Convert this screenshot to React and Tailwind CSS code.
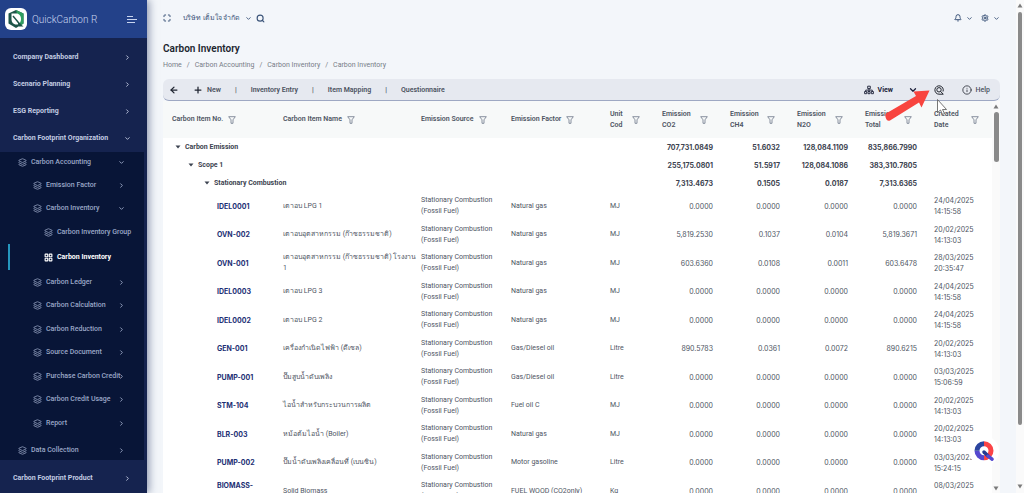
import clsx from 'clsx';
import {
  ArrowLeft,
  Bell,
  ChevronDown,
  ChevronRight,
  Info,
  Layers,
  LayoutGrid,
  Maximize,
  Plus,
  Search,
  Settings,
} from 'lucide-react';

const SUB_MENU = [
  { label: 'Carbon Accounting', level: 1, open: true },
  { label: 'Emission Factor', level: 2 },
  { label: 'Carbon Inventory', level: 2, open: true },
  { label: 'Carbon Inventory Group', level: 3 },
  { label: 'Carbon Inventory', level: 3, active: true },
  { label: 'Carbon Ledger', level: 2 },
  { label: 'Carbon Calculation', level: 2 },
  { label: 'Carbon Reduction', level: 2 },
  { label: 'Source Document', level: 2 },
  { label: 'Purchase Carbon Credit', level: 2 },
  { label: 'Carbon Credit Usage', level: 2 },
  { label: 'Report', level: 2 },
  { label: 'Data Collection', level: 1, last: true },
];

const COLUMNS = [
  { title: 'Carbon Item No.', width: 'w-[111px]' },
  { title: 'Carbon Item Name' },
  { title: 'Emission Source', width: 'w-[90px]' },
  { title: 'Emission Factor', width: 'w-[99px]' },
  { title: 'Unit', second: 'Cod', width: 'w-[52px]' },
  { title: 'Emission', second: 'CO2', width: 'w-[68px]' },
  { title: 'Emission', second: 'CH4', width: 'w-[67px]' },
  { title: 'Emission', second: 'N2O', width: 'w-[68px]' },
  { title: 'Emission', second: 'Total', width: 'w-[69px]' },
  { title: 'Created', second: 'Date', width: 'w-[67px]' },
];

const GROUPS = [
  { label: 'Carbon Emission', indent: 'pl-3', values: ['707,731.0849', '51.6032', '128,084.1109', '835,866.7990'] },
  { label: 'Scope 1', indent: 'pl-[25px]', values: ['255,175.0801', '51.5917', '128,084.1086', '383,310.7805'] },
  { label: 'Stationary Combustion', indent: 'pl-[41px]', values: ['7,313.4673', '0.1505', '0.0187', '7,313.6365'] },
];

const ZERO = ['0.0000', '0.0000', '0.0000', '0.0000'];

const ITEMS = [
  { no: 'IDEL0001', name: 'เตาอบ LPG 1', factor: 'Natural gas', unit: 'MJ', values: ZERO, date: '24/04/2025', time: '14:15:58' },
  { no: 'OVN-002', name: 'เตาอบอุตสาหกรรม (ก๊าซธรรมชาติ)', factor: 'Natural gas', unit: 'MJ', values: ['5,819.2530', '0.1037', '0.0104', '5,819.3671'], date: '20/02/2025', time: '14:13:03' },
  { no: 'OVN-001', name: 'เตาอบอุตสาหกรรม (ก๊าซธรรมชาติ) โรงงาน\n1', factor: 'Natural gas', unit: 'MJ', values: ['603.6360', '0.0108', '0.0011', '603.6478'], date: '28/03/2025', time: '20:35:47' },
  { no: 'IDEL0003', name: 'เตาอบ LPG 3', factor: 'Natural gas', unit: 'MJ', values: ZERO, date: '24/04/2025', time: '14:15:58' },
  { no: 'IDEL0002', name: 'เตาอบ LPG 2', factor: 'Natural gas', unit: 'MJ', values: ZERO, date: '24/04/2025', time: '14:15:58' },
  { no: 'GEN-001', name: 'เครื่องกำเนิดไฟฟ้า (ดีเซล)', factor: 'Gas/Diesel oil', unit: 'Litre', values: ['890.5783', '0.0361', '0.0072', '890.6215'], date: '20/02/2025', time: '14:13:03' },
  { no: 'PUMP-001', name: 'ปั๊มสูบน้ำดับเพลิง', factor: 'Gas/Diesel oil', unit: 'Litre', values: ZERO, date: '03/03/2025', time: '15:06:59' },
  { no: 'STM-104', name: 'ไอน้ำสำหรับกระบวนการผลิต', factor: 'Fuel oil C', unit: 'MJ', values: ZERO, date: '20/02/2025', time: '14:13:03' },
  { no: 'BLR-003', name: 'หม้อต้มไอน้ำ (Boiler)', factor: 'Natural gas', unit: 'MJ', values: ZERO, date: '20/02/2025', time: '14:13:03' },
  { no: 'PUMP-002', name: 'ปั๊มน้ำดับเพลิงเคลื่อนที่ (เบนซิน)', factor: 'Motor gasoline', unit: 'Litre', values: ZERO, date: '03/03/2025', time: '15:24:15' },
  { no: 'BIOMASS-001', name: 'Solid Biomass', factor: 'FUEL WOOD (CO2only)', unit: 'Kg', values: ZERO, date: '08/03/2025', time: '10:20:31' },
];

function Logo() {
  return (
    <svg viewBox="0 0 22 22" className="size-[22px] shrink-0">
      <rect width="22" height="22" rx="6" fill="#fff" />
      <path d="M11 2 L18.5 5.500 V15.500 L11 20 L3.5 15.500 V5.500 Z" fill="#1d5548" />
      <path d="M11 2 L18.5 5.500 V15.500 L15 18 L13 10 Z" fill="#2f9e5f" />
      <path d="M6.500 5.500 H11 C14.500 5.500 16 8 16 11 C16 14.500 14 16.500 11.500 16.500 C8 16.500 6.500 14 6.500 11 Z" fill="#fff" />
      <path d="M8 8 L15.500 17" stroke="#1d5548" strokeWidth="1.4" />
      <path d="M12.500 13.500 L18.500 18.500 L14 18.500 Z" fill="#1d5548" />
    </svg>
  );
}

function FilterIcon() {
  return (
    <svg viewBox="0 0 8 8" className="size-2 shrink-0" fill="none" stroke="#7c8594" strokeWidth="0.9">
      <path d="M0.700 0.700 H7.300 L5 3.800 V7.300 H3 V3.800 Z" strokeLinejoin="round" />
    </svg>
  );
}

function HierarchyIcon() {
  return (
    <svg viewBox="0 0 10 10" className="size-2.5" fill="none" stroke="#2b2f45" strokeWidth="1">
      <path d="M3.700 1.200 H6.300 V3.600 H3.700 Z M0.600 6.500 H2.700 V8.700 H0.600 Z M4 6.500 H6 V8.700 H4 Z M7.300 6.500 H9.400 V8.700 H7.300 Z" />
      <path d="M5 3.600 V6.500 M1.700 6.500 V5.100 H8.300 V6.500" />
    </svg>
  );
}

function Triangle({ up }) {
  return (
    <svg viewBox="0 0 6 5" className="h-[5px] w-1.5 shrink-0" fill="#7b7b7b">
      <path d={up ? 'M3 0.500 L5.500 4.500 H0.500 Z' : 'M0.500 0.500 H5.500 L3 4.500 Z'} />
    </svg>
  );
}

function TopLink({ label, open, className }) {
  return (
    <a href="#" className={clsx('flex h-[27px] shrink-0 items-center justify-between pr-4 pl-[13px] text-[7px] font-bold text-[#c3cce2]', className)}>
      {label}
      {open ? <ChevronDown className="size-[7px]" strokeWidth={3} /> : <ChevronRight className="size-[7px]" strokeWidth={3} />}
    </a>
  );
}

function SubLink({ item }) {
  const Icon = item.active ? LayoutGrid : Layers;
  const Chevron = item.open ? ChevronDown : ChevronRight;
  return (
    <a
      href="#"
      className={clsx(
        'flex shrink-0 items-center gap-1 pr-[19px] text-[7px] whitespace-nowrap',
        item.active && 'ml-2 h-[26px] border-l-2 border-[#2596be] pl-[34px] font-bold text-white',
        !item.active && 'font-medium text-[#9ba8c7]',
        item.last && 'mt-[5px] h-5',
        item.level === 1 && 'pl-[18px]',
        item.level === 1 && !item.last && 'h-[21px]',
        item.level === 2 && 'h-[23px] pl-[33px] even:h-6',
        item.level === 3 && !item.active && 'h-6 pl-11'
      )}
    >
      <Icon className="size-[9px] shrink-0" strokeWidth={item.active ? 3 : 2} />
      <span className="min-w-0 flex-1">{item.label}</span>
      {item.level < 3 && <Chevron className="size-[7px] shrink-0" strokeWidth={3} />}
    </a>
  );
}

function Sidebar() {
  return (
    <aside className="z-10 flex w-[147px] shrink-0 flex-col overflow-hidden bg-[#15234f] shadow-[2px_0_8px_rgba(40,55,100,0.5)]">
      <div className="flex h-[38px] shrink-0 items-center gap-[5px] bg-[#234189] pr-2.5 pl-[5px]">
        <Logo />
        <span className="flex-1 text-[10px] font-light whitespace-nowrap text-[#c9d5ef]">QuickCarbon R</span>
        <button aria-label="Toggle menu" className="flex h-3 w-2.5 flex-col justify-center gap-0.5">
          <span className="h-px w-1.5 bg-[#c9d5ef]" />
          <span className="h-px w-2.5 bg-[#c9d5ef]" />
          <span className="h-px w-2 bg-[#c9d5ef]" />
        </button>
      </div>
      <nav className="flex flex-col pt-1.5">
        <TopLink label="Company Dashboard" />
        <TopLink label="Scenario Planning" />
        <TopLink label="ESG Reporting" />
        <TopLink label="Carbon Footprint Organization" open />
        <div className="mr-[3px] flex flex-col bg-[#081537]">
          {SUB_MENU.map((item, i) => (
            <SubLink key={i} item={item} />
          ))}
        </div>
        <TopLink label="Carbon Footprint Product" className="mt-[5px]" />
      </nav>
    </aside>
  );
}

function TopBar() {
  return (
    <header className="flex h-9 shrink-0 items-center text-[#3b5479]">
      <button aria-label="Full screen" className="mr-3">
        <Maximize className="size-2" strokeWidth={3} />
      </button>
      <div className="flex items-center">
        <select aria-label="Company" className="w-[62px] appearance-none bg-transparent text-[7px] font-medium">
          <option>บริษัท เต็มใจ จำกัด</option>
        </select>
        <ChevronDown className="size-[7px]" strokeWidth={3} />
      </div>
      <button aria-label="Search" className="ml-1">
        <Search className="size-[9px]" strokeWidth={3} />
      </button>
      <div className="ml-auto flex items-center gap-2">
        <button aria-label="Notifications" className="flex items-center gap-1">
          <Bell className="size-2" strokeWidth={3} />
          <ChevronDown className="size-[7px]" strokeWidth={3} />
        </button>
        <button aria-label="Settings" className="flex items-center gap-1">
          <Settings className="size-2" strokeWidth={3} />
          <ChevronDown className="size-[7px]" strokeWidth={3} />
        </button>
      </div>
    </header>
  );
}

// Red arrow and mouse pointer laid over the insights button
function Pointer() {
  return (
    <svg viewBox="0 0 66 40" className="pointer-events-none absolute top-0 left-[-50px] z-10 h-10 w-[66px] max-w-none">
      <path d="M45.500 5.500 L29.500 6.500 L32 11 L2 28.500 Q0.500 31 2.500 34.500 Q4 36.500 6 35.500 L35 17.500 L37.500 22.500 Z" fill="#f8443f" />
      <path d="M53.500 14.500 V27.500 L56.500 25 L58.500 29.500 L60.500 28.500 L58.500 24.500 H62.500 Z" fill="#fff" stroke="#555" strokeWidth="0.8" />
    </svg>
  );
}

function Toolbar() {
  return (
    <div className="flex h-[22px] shrink-0 items-center rounded-md border-b border-[#9ea8c3] bg-[#e6e9f0] px-1.5 pt-px text-[7px] font-semibold text-[#4b5260]">
      <button aria-label="Back" className="mr-3.5">
        <ArrowLeft className="size-2.5 text-[#1f2430]" strokeWidth={3} />
      </button>
      <div className="flex items-center gap-3.5">
        <button className="flex items-center gap-1">
          <Plus className="size-2.5 text-[#1f2430]" strokeWidth={3} />
          New
        </button>
        <span>|</span>
        <button>Inventory Entry</button>
        <span>|</span>
        <button>Item Mapping</button>
        <span>|</span>
        <button>Questionnaire</button>
      </div>
      <div className="ml-auto flex items-center">
        <button className="flex items-center gap-1 font-bold text-[#1b1f3a]">
          <HierarchyIcon />
          <span className="w-[26px] text-left">View</span>
          <ChevronDown className="size-2.5" strokeWidth={3} />
        </button>
        <div className="relative ml-4 flex">
          <button aria-label="Insights">
            <svg viewBox="0 0 10 10" className="size-2.5" fill="none" stroke="#22262f" strokeWidth="1">
              <path d="M9 6.500 A4.200 4.200 0 1 0 5 9.200 H9.300" />
              <circle cx="5" cy="4.800" r="2.200" />
              <path d="M6.500 6.300 L9.200 9.200" />
            </svg>
          </button>
          <Pointer />
        </div>
        <button className="mr-1 ml-[18px] flex items-center gap-1 font-medium">
          <Info className="size-2.5 text-[#2b2f3a]" />
          Help
        </button>
      </div>
    </div>
  );
}

function InventoryTable() {
  return (
    <table className="w-full table-fixed text-left text-[7px] leading-[11px] text-[#4e5563]">
      <thead>
        <tr className="h-[37px] bg-[#f7f9f9]">
          {COLUMNS.map((col, i) => (
            <th key={i} scope="col" className={clsx('pr-2 pl-[9px] font-semibold', col.width)}>
              <div className={clsx('flex items-center', col.second ? 'justify-between pr-[5px]' : 'gap-[5px]')}>
                <span className="whitespace-nowrap">
                  {col.title}
                  {col.second && <br />}
                  {col.second}
                </span>
                <FilterIcon />
              </div>
            </th>
          ))}
        </tr>
      </thead>
      <tbody>
        {GROUPS.map((group) => (
          <tr key={group.label} className="h-[18px] font-bold text-[#3c4350]">
            <td colSpan={5}>
              <button className={clsx('flex items-center gap-1', group.indent)}>
                <svg viewBox="0 0 6 4" className="h-1 w-1.5" fill="#3c4350">
                  <path d="M0.500 0.500 H5.500 L3 3.500 Z" />
                </svg>
                {group.label}
              </button>
            </td>
            {group.values.map((value, i) => (
              <td key={i} className="pr-2 text-right font-[Inter,sans-serif]">{value}</td>
            ))}
            <td />
          </tr>
        ))}
      </tbody>
      <tbody>
        {ITEMS.map((item) => (
          <tr key={item.no} className="h-7 even:h-[29px]">
            <td className="pr-4 pl-[54px] font-[Inter,sans-serif] font-bold text-[#1c2f74]">{item.no}</td>
            <td className="pl-[9px] whitespace-pre">{item.name}</td>
            <td className="pl-[9px] whitespace-nowrap">
              Stationary Combustion
              <br />
              (Fossil Fuel)
            </td>
            <td className="pl-[9px]">{item.factor}</td>
            <td className="pl-[9px]">{item.unit}</td>
            {item.values.map((value, i) => (
              <td key={i} className="pr-2 text-right font-[Inter,sans-serif]">{value}</td>
            ))}
            <td className="pl-[9px] font-[Inter,sans-serif]">
              {item.date}
              <br />
              {item.time}
            </td>
          </tr>
        ))}
      </tbody>
    </table>
  );
}

function ChatButton() {
  return (
    <button aria-label="Open assistant" className="absolute right-[25px] bottom-[27px] z-20 flex size-[30px] items-center justify-center rounded-full bg-white">
      <svg viewBox="0 0 20 20" className="size-5">
        <g fill="none" strokeWidth="5">
          <path d="M10 2.800 A7 7 0 0 1 10 16.800" stroke="#fb4446" />
          <path d="M10 16.800 A7 7 0 0 1 3 9.800" stroke="#5548cf" />
          <path d="M3 9.800 A7 7 0 0 1 10 2.800" stroke="#2b459f" />
        </g>
        <path d="M10 11 L14 15" stroke="#233b93" strokeWidth="3.500" strokeLinecap="round" />
        <path d="M14 15 L18 18.200" stroke="#5548cf" strokeWidth="3.500" strokeLinecap="round" />
      </svg>
    </button>
  );
}

export default function App() {
  return (
    <div className="relative flex h-screen overflow-hidden bg-[#f3f6fa] font-[Roboto,'Noto_Sans',sans-serif]">
      <Sidebar />
      <main className="flex min-w-0 flex-1 flex-col px-4">
        <TopBar />
        <h1 className="mt-[5px] text-[10px] leading-4 font-semibold text-[#20242e]">Carbon Inventory</h1>
        <nav aria-label="Breadcrumb" className="mt-0.5 mb-2 flex gap-[5px] text-[7px] leading-3 text-[#777d87]">
          <a href="#">Home</a>
          <span>/</span>
          <a href="#">Carbon Accounting</a>
          <span>/</span>
          <a href="#">Carbon Inventory</a>
          <span>/</span>
          <a href="#">Carbon Inventory</a>
        </nav>
        <Toolbar />
        <section className="flex min-h-0 flex-1 overflow-hidden bg-white">
          <div className="min-w-0 flex-1">
            <InventoryTable />
          </div>
          <div className="flex w-2 shrink-0 flex-col items-center bg-[#fafafa] pt-[3px] pb-0.5">
            <Triangle up />
            <div className="mt-[3px] h-[50px] w-[5px] rounded-full bg-[#8a8a8a]" />
            <div className="mt-auto">
              <Triangle />
            </div>
          </div>
        </section>
      </main>
      <div className="flex w-2 shrink-0 flex-col items-center bg-[#fafafa] pt-[3px] pb-1">
        <Triangle up />
        <div className="mt-1 h-[85%] w-1 rounded-full bg-[#8a8a8a]" />
        <div className="mt-auto">
          <Triangle />
        </div>
      </div>
      <ChatButton />
    </div>
  );
}
